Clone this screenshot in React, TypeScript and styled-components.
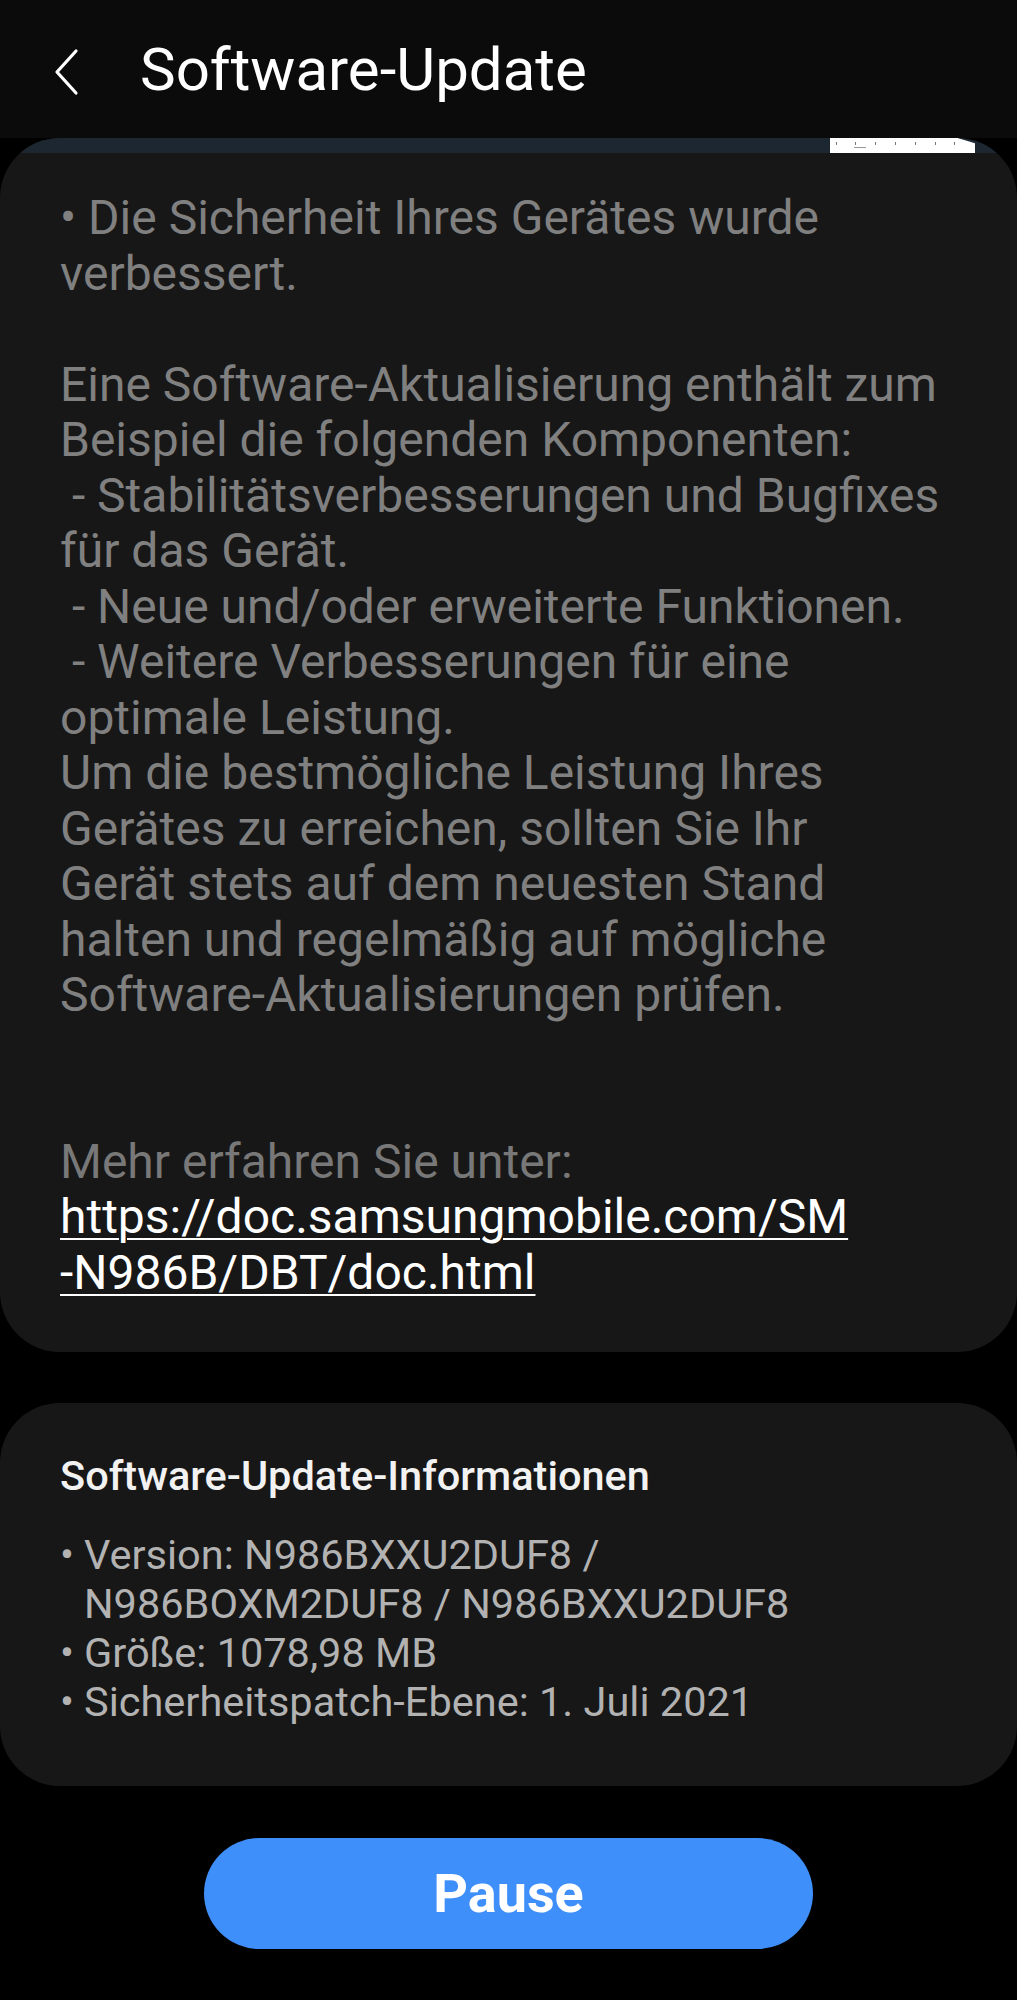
import React from 'react';
import styled, { createGlobalStyle } from 'styled-components';

const GlobalStyle = createGlobalStyle`
  html, body {
    margin: 0;
    padding: 0;
    background: #000;
  }
  body {
    font-family: Roboto, 'Noto Sans', 'Liberation Sans', sans-serif;
    -webkit-font-smoothing: antialiased;
  }
`;

const releaseNotes = [
  '• Die Sicherheit Ihres Gerätes wurde',
  'verbessert.',
  '',
  'Eine Software-Aktualisierung enthält zum',
  'Beispiel die folgenden Komponenten:',
  ' - Stabilitätsverbesserungen und Bugfixes',
  'für das Gerät.',
  ' - Neue und/oder erweiterte Funktionen.',
  ' - Weitere Verbesserungen für eine',
  'optimale Leistung.',
  'Um die bestmögliche Leistung Ihres',
  'Gerätes zu erreichen, sollten Sie Ihr',
  'Gerät stets auf dem neuesten Stand',
  'halten und regelmäßig auf mögliche',
  'Software-Aktualisierungen prüfen.',
];

const updateInfo = [
  ['Version: N986BXXU2DUF8 /', 'N986BOXM2DUF8 / N986BXXU2DUF8'],
  ['Größe: 1078,98 MB'],
  ['Sicherheitspatch-Ebene: 1. Juli 2021'],
];

export default function App() {
  return (
    <>
      <GlobalStyle />
      <Screen>
        <Header>
          <BackButton aria-label="Zurück">
            <svg width="26" height="48" viewBox="0 0 26 48" fill="none">
              <path d="M22 3 L3 24 L22 45" stroke="#fff" strokeWidth="3.2" strokeLinecap="round" strokeLinejoin="round" />
            </svg>
          </BackButton>
          <Title>Software-Update</Title>
        </Header>

        <Content>
          <Card>
            <ProgressStrip>
              <ProgressMarker>
                <svg width="145" height="15" viewBox="0 0 145 15">
                  {[6, 25, 45, 65, 85, 105, 124].map(x => (
                    <rect key={x} x={x} y="4" width="1" height="3" fill="#777" />
                  ))}
                  <rect x="24" y="9" width="12" height="1" fill="#999" />
                </svg>
              </ProgressMarker>
            </ProgressStrip>
            <NotesBody>
              <Notes>{releaseNotes.join('\n')}</Notes>
              <MoreLabel>Mehr erfahren Sie unter:</MoreLabel>
              <DocLink href="#">
                https://doc.samsungmobile.com/SM
                <br />
                -N986B/DBT/doc.html
              </DocLink>
            </NotesBody>
          </Card>

          <InfoCard>
            <InfoTitle>Software-Update-Informationen</InfoTitle>
            <InfoList>
              {updateInfo.map(lines => (
                <InfoItem key={lines[0]}>
                  <Bullet>•</Bullet>
                  <span>
                    {lines.map((line, i) => (
                      <React.Fragment key={line}>
                        {i > 0 && <br />}
                        {line}
                      </React.Fragment>
                    ))}
                  </span>
                </InfoItem>
              ))}
            </InfoList>
          </InfoCard>

          <ButtonRow>
            <PauseButton>Pause</PauseButton>
          </ButtonRow>
        </Content>
      </Screen>
    </>
  );
}

const Screen = styled.div`
  min-height: 2000px;
  background: #000;
`;

const Header = styled.header`
  height: 138px;
  background: #0b0b0b;
  display: flex;
  align-items: center;
  padding-left: 54px;
  box-sizing: border-box;
`;

const BackButton = styled.div`
  width: 26px;
  height: 48px;
  display: flex;
  margin-top: 6px;
`;

const Title = styled.h1`
  margin: 0 0 0 60px;
  color: #fff;
  font-size: 60px;
  font-weight: 400;
  line-height: 1;
  margin-top: 2px;
`;

const Content = styled.main`
  display: flex;
  flex-direction: column;
  gap: 51px;
`;

const Card = styled.section`
  background: #171717;
  border-radius: 60px;
  overflow: hidden;
`;

const ProgressStrip = styled.div`
  height: 15px;
  background: #1c2731;
  display: flex;
  justify-content: flex-end;
  padding-right: 42px;
`;

const ProgressMarker = styled.div`
  width: 145px;
  height: 15px;
  background: #fff;
  clip-path: polygon(0 0, 88% 0, 100% 35%, 100% 100%, 0 100%);
  display: flex;
`;

const NotesBody = styled.div`
  padding: 37px 40px 52px 60px;
  font-size: 48px;
  line-height: 55.5px;
`;

const Notes = styled.div`
  white-space: pre;
  color: #808080;
  margin-bottom: 111px;
`;

const MoreLabel = styled.div`
  color: #787878;
  white-space: nowrap;
`;

const DocLink = styled.a`
  display: block;
  color: #fff;
  white-space: nowrap;
  text-decoration: underline;
  text-decoration-thickness: 2px;
  text-underline-offset: 5px;
`;

const InfoCard = styled.section`
  background: #171717;
  border-radius: 60px;
  padding: 49px 60px 60px;
`;

const InfoTitle = styled.h2`
  margin: 0;
  color: #f2f2f2;
  font-size: 41.5px;
  font-weight: 500;
  line-height: 48px;
`;

const InfoList = styled.ul`
  list-style: none;
  margin: 30px 0 0;
  padding: 0;
  color: #b2b2b2;
  font-size: 41.5px;
  line-height: 49px;
`;

const InfoItem = styled.li`
  display: flex;
  white-space: nowrap;
`;

const Bullet = styled.span`
  width: 24px;
  flex-shrink: 0;
`;

const ButtonRow = styled.div`
  display: flex;
  justify-content: center;
  padding-top: 1px;
`;

const PauseButton = styled.button`
  width: 609px;
  height: 111px;
  border: none;
  border-radius: 56px;
  background: #3e8ff9;
  color: #fff;
  font-family: Roboto, 'Noto Sans', sans-serif;
  font-size: 54px;
  font-weight: 700;
  cursor: pointer;
`;
